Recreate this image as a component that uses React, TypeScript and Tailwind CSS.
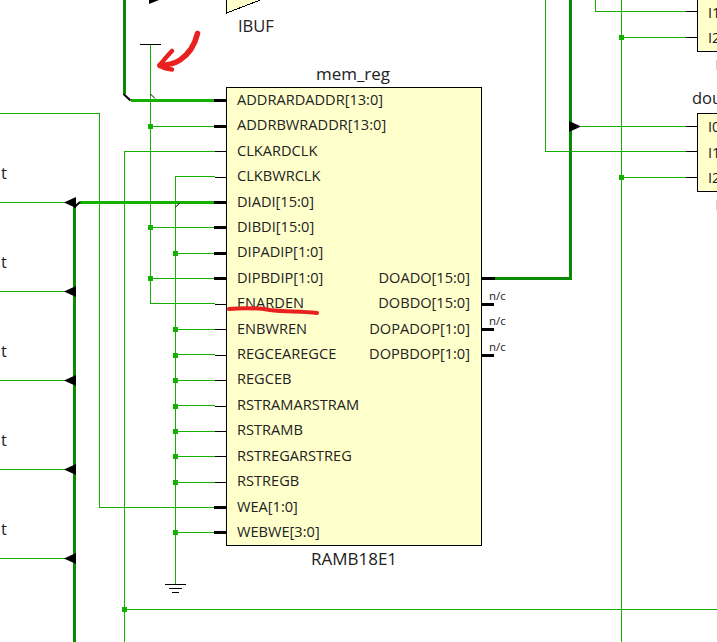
const GREEN = "#14b000";
const DARK = "#0a8a00";

const inputPins = [
  "ADDRARDADDR[13:0]",
  "ADDRBWRADDR[13:0]",
  "CLKARDCLK",
  "CLKBWRCLK",
  "DIADI[15:0]",
  "DIBDI[15:0]",
  "DIPADIP[1:0]",
  "DIPBDIP[1:0]",
  "ENARDEN",
  "ENBWREN",
  "REGCEAREGCE",
  "REGCEB",
  "RSTRAMARSTRAM",
  "RSTRAMB",
  "RSTREGARSTREG",
  "RSTREGB",
  "WEA[1:0]",
  "WEBWE[3:0]",
];
const outputPins = ["DOADO[15:0]", "DOBDO[15:0]", "DOPADOP[1:0]", "DOPBDOP[1:0]"];
const rowY = [100, 126, 151, 177, 202, 227, 253, 278, 304, 329, 355, 380, 406, 431, 456, 482, 507, 532];
const thick = [0, 1, 4, 5, 6, 7, 16, 17];
const junctions: [number, number][] = [
  [151, 126], [151, 227], [151, 278], [176, 253], [176, 329], [176, 355], [176, 380], [176, 406],
  [176, 431], [176, 456], [176, 482], [176, 532], [125, 609], [622, 37], [622, 177],
];
const arrows = [202, 291, 380, 469, 558];

function Wires() {
  return (
    <svg className="absolute inset-0" width={717} height={642} shapeRendering="crispEdges">
      <g fill="none" stroke={GREEN} strokeWidth={1}>
        <path d="M0 113.5H99.5V507.5H215" />
        <path d="M150.5 44V303.5H215" />
        <path d="M150.5 126.5H215M150.5 227.5H215M150.5 278.5H215" />
        <path d="M124.5 642V151.5H215" />
        <path d="M175.5 584V176.5H215" />
        <path d="M175.5 253.5H215M175.5 329.5H215M175.5 354.5H215M175.5 380.5H215M175.5 405.5H215M175.5 431.5H215M175.5 456.5H215M175.5 482.5H215M175.5 532.5H215" />
        <path d="M124.5 609.5H717" />
        <path d="M545.5 0V151.5H686M595.5 0V11.5H686M621.5 0V642M621.5 37.5H686M621.5 177.5H686M581 126.5H686" />
        <path d="M0 202.5H65M0 291.5H65M0 380.5H65M0 469.5H65M0 558.5H65" />
      </g>
      <g fill={GREEN} stroke="none">
        <rect x={131} y={99} width={83} height={3} />
        <rect x={80} y={201} width={134} height={3} />
      </g>
      <g fill={DARK} stroke="none">
        <rect x={123} y={0} width={3} height={94} />
        <rect x={73} y={207} width={3} height={435} />
        <rect x={569} y={0} width={3} height={280} />
        <rect x={494} y={277} width={78} height={3} />
      </g>
      {junctions.map(([x, y]) => (
        <rect key={`${x}-${y}`} x={x - 3} y={y - 2} width={5} height={5} fill={GREEN} />
      ))}
      <g fill="#000">
        {rowY.map((y, i) =>
          thick.includes(i) ? (
            <rect key={y} x={214} y={y - 1} width={12} height={3} />
          ) : (
            <rect key={y} x={215} y={y} width={11} height={1} />
          ),
        )}
        <rect x={482} y={277} width={13} height={3} />
        <rect x={482} y={303} width={12} height={3} />
        <rect x={482} y={328} width={12} height={3} />
        <rect x={482} y={354} width={12} height={3} />
        <rect x={686} y={11} width={11} height={1} />
        <rect x={686} y={37} width={11} height={1} />
        <rect x={686} y={126} width={11} height={1} />
        <rect x={686} y={151} width={11} height={1} />
        <rect x={686} y={177} width={11} height={1} />
      </g>
      <g shapeRendering="auto" fill="#000">
        {arrows.map((y) => (
          <path key={y} d={`M64 ${y + 0.5}L76 ${y - 5}V${y + 6}Z`} />
        ))}
        <path d="M581 126.5L569 121V132Z" />
        <path d="M149 0H159L149 4Z" />
        <path d="M123.5 94L130.5 100.5" stroke="#000" strokeWidth={2} fill="none" />
        <path d="M74 207.5L80 202" stroke="#000" strokeWidth={2} fill="none" />
        <path d="M150.5 94L155 98.5M175.5 207L180 203" stroke="#000" strokeWidth={1} fill="none" />
      </g>
      <path d="M140 44.5H161M165 584.5H186M169 588.5H182M172 592.5H179" stroke="#000" fill="none" />
      <path d="M226.5 -1V13L263 -1Z" fill="#ffffcc" stroke="#000" />
    </svg>
  );
}

function Annotations() {
  return (
    <svg className="absolute inset-0" width={717} height={642}>
      <g fill="none" stroke="#e8201f" strokeLinecap="round" strokeLinejoin="round">
        <path d="M197.5 33.5C195 44 189 54 180 60C174 64 168 65 160 65.5" strokeWidth={5.5} />
        <path d="M172 51C167 56 163 61 159.5 65.5C163 68 167 69 172 69.5" strokeWidth={4.5} />
        <path d="M229 309C245 307.5 255 307.5 270 310C285 312 300 311 317 313" strokeWidth={4} />
      </g>
    </svg>
  );
}

function RamCell() {
  return (
    <div className="absolute left-[226px] top-[61px] flex w-[256px] flex-col items-center text-[17px] leading-[25px]">
      <div className="h-[26px] -translate-x-[1px]">mem_reg</div>
      <div className="flex h-[459px] w-full border border-black bg-[#ffffcc] text-[14.6px] leading-[25.41px]">
        <div className="flex w-0 flex-1 flex-col pl-[10px] -mt-[1px]">
          {inputPins.map((p) => (
            <div key={p} className="h-[25.41px] whitespace-nowrap">
              {p}
            </div>
          ))}
        </div>
        <div className="flex flex-col items-end pr-[11px] pt-[177px]">
          {outputPins.map((p) => (
            <div key={p} className="h-[25.41px] whitespace-nowrap">
              {p}
            </div>
          ))}
        </div>
      </div>
      <div className="h-[25px]">RAMB18E1</div>
    </div>
  );
}

function LutCell({ className, title, pins }: { className: string; title?: string; pins: string[] }) {
  return (
    <div className={`absolute left-[697px] flex w-[60px] flex-col ${className}`}>
      {title && <div className="-ml-[5px] h-[26px] text-[16.5px] leading-[22px]">{title}</div>}
      <div className="flex flex-col border border-black bg-[#ffffcc] pl-[10px] text-[14.6px] leading-[25.5px]">
        {pins.map((p) => (
          <div key={p} className="h-[25.5px]">
            {p}
          </div>
        ))}
      </div>
      <div className="ml-[18px] text-[14.6px] leading-[24px] text-[#aaaaaa]">LUT3</div>
    </div>
  );
}

export default function App() {
  return (
    <div className="relative h-[642px] w-[717px] overflow-hidden bg-white font-['Open_Sans','Noto_Sans',sans-serif] text-[#222]">
      <Wires />
      <LutCell className="top-[-27px]" pins={["I0", "I1", "I2"]} />
      <LutCell className="top-[87px]" title="dout" pins={["I0", "I1", "I2"]} />
      <RamCell />
      <div className="absolute left-[238px] top-[13px] text-[16.5px] leading-[25px]">IBUF</div>
      <div className="absolute left-[489px] top-[289px] flex flex-col text-[11.5px] leading-[25.41px]">
        <div className="h-[25.41px] leading-[14px]">n/c</div>
        <div className="h-[25.41px] leading-[14px]">n/c</div>
        <div className="h-[25.41px] leading-[14px]">n/c</div>
      </div>
      <div className="absolute left-[1px] top-[160px] flex flex-col text-[16.5px] leading-[25px]">
        {[0, 1, 2, 3, 4].map((i) => (
          <div key={i} className="h-[89px]">
            t
          </div>
        ))}
      </div>
      <Annotations />
    </div>
  );
}
